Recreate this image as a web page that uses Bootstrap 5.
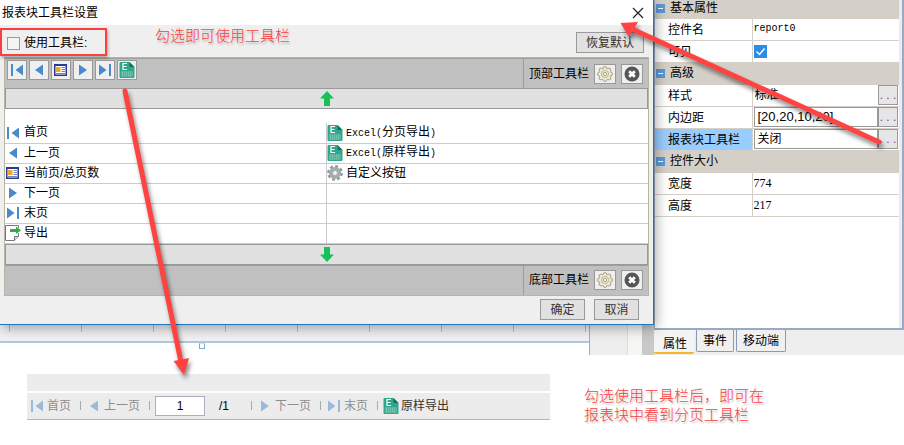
<!DOCTYPE html>
<html lang="zh-CN">
<head>
<meta charset="utf-8">
<meta name="viewport" content="width=device-width, initial-scale=1">
<title>报表块工具栏设置</title>
<link href="https://cdn.jsdelivr.net/npm/bootstrap@5.3.0/dist/css/bootstrap.min.css" rel="stylesheet">
<style>
  body { font: 12px/18px "Liberation Sans", "Noto Sans CJK SC", sans-serif; color: #000; background: #fff; }
  button, input { font: inherit; color: inherit; }
  .ico { width: 16px; height: 16px; flex: none; display: block; }
  .latin { font-family: "Liberation Mono", "Noto Sans CJK SC", monospace; font-size: 10px; }
  .note { color: #f8403e; font-size: 15px; font-weight: 300; line-height: 19px; text-shadow: 1px 2px 2px rgba(0,0,0,.25); }

  /* settings dialog */
  .dlg { background: #efefef; border-right: 1px solid #1c79c0; border-bottom: 1px solid #1c79c0; box-shadow: 2px 3px 12px rgba(0,0,0,.35); z-index: 2; }
  .dlg-title { height: 25px; background: #fff; padding: 0 9px 0 2px; }
  .dlg-close { border: 0; background: none; padding: 0; width: 12px; height: 12px; }
  .dlg-close svg { display: block; }
  .dlg-options { height: 32px; padding-right: 9px; }
  .use-box { margin-top: 3px; width: 107px; height: 28px; border: 2px solid #f8403e; padding: 2px 0 0 5px; gap: 4px; box-shadow: 1px 2px 3px rgba(0,0,0,.3); }
  .use-box input { appearance: none; width: 13px; height: 13px; margin: 0; border: 1px solid #999; background: #f4f4f4; }
  .use-note { margin: 1px 0 0 48px; }
  .plain-btn { height: 21px; border: 1px solid #999; background: #e1e1e1; color: #333; padding: 0; line-height: 20px; width: 45px; }
  .plain-btn.wide { width: 68px; margin-top: 7px; }
  .frame { margin: 0 4px; border: 1px solid #b7b5a3; }
  .tray { background: #c0c0c0; min-height: 30px; border-top: 1px solid #a09e92; }
  .tray-items { padding: 1px 2px; gap: 2px; border-right: 1px solid #a09e92; }
  .tray-side { width: 124px; gap: 5px; padding-left: 5px; }
  .tool { width: 20px; height: 20px; padding: 1px; border: 1px solid #999; background: #efefef; }
  .tray-side .tool { width: 22px; padding: 1px 2px; }
  .bar { height: 21px; background: #e1e1e1; border: 1px solid #999; }
  .items-area { background: #fff; padding-top: 14px; }
  .items-area table { table-layout: fixed; border-collapse: collapse; }
  .items-area td { height: 20px; padding: 0; border-bottom: 1px solid #ccc; line-height: 19px; }
  .items-area td + td { border-left: 1px solid #ccc; }
  .cell { gap: 3px; height: 19px; }

  .dlg-foot { gap: 9px; padding: 3px 14px 4px 0; }

  /* design canvas below the dialog */
  .canvas { height: 30px; background: #eee; }
  .paper { width: 590px; border-right: 1px solid #aaa; }
  .ruler { height: 16px; background: repeating-linear-gradient(90deg, transparent 0 9px, #bbb 9px 10px, transparent 10px 72px) 0 0 / 100% 7px no-repeat, #f1f1f3; }
  .sheet { height: 14px; background: #fff; border-top: 2px solid #a9c9e6; }
  .handle { width: 6px; height: 6px; border: 1px solid #85a9c6; border-top-color: #ddd; margin-left: 199px; }
  .gutter { width: 12px; background: #c9c9c9; }
  .gap-strip { width: 15px; background: #f6f6f4; border-left: 1px solid #ddd; }

  /* property pane */
  .pane { width: 250px; background: #eee; }
  .pane-body { background: #fff; border: solid #9aa9c4; border-width: 0 2px 2px 1px; height: 330px; }
  .pane-inner { border-right: 3px solid #ececec; height: 100%; }
  .props { table-layout: fixed; border-collapse: collapse; }
  .props td, .props th { height: 22px; padding: 0; font-weight: 400; border-bottom: 1px solid #d4d0c8; line-height: 20px; }
  .props .group th { background: #d4d0c8; }
  .props tr.first th { height: 18px; line-height: 15px; }
  .props .name { padding: 1px 0 0 13px; border-right: 1px solid #d4d0c8; }
  .props .chosen .name { background: #99ccff; }
  .fold { width: 9px; height: 9px; padding: 0; border: 0; background: #5b9bd8; margin: 0 1px; flex: none; }
  .fold::before { content: ""; display: block; width: 5px; height: 1px; background: #fff; margin: 0 auto; }
  .ell { width: 20px; height: 20px; padding: 0; border: 1px solid #999; background: #e6e6e6; color: #803c90; line-height: 16px; flex: none; }
  .value-row { padding: 0 1px; }
  .field { height: 20px; min-width: 0; border: 1px solid #999; padding: 0 3px; background: #fff; }
  .field.num { font-size: 13px; }
  .bare { border: 0; padding: 0 0 0 1px; min-width: 0; background: none; }
  .digits { font-family: "Liberation Serif", serif; }
  .tick { appearance: none; display: block; width: 13px; height: 13px; margin: 0 0 0 1px; background: #2b8cea url("data:image/svg+xml,%3Csvg xmlns='http://www.w3.org/2000/svg' viewBox='0 0 13 13'%3E%3Cpath d='M2.5 6.5l3 3 5-6' fill='none' stroke='white' stroke-width='1.5'/%3E%3C/svg%3E"); }
  .pane-tabs { gap: 2px; }
  .pane-tab { height: 22px; padding: 0 6px; border: 1px solid #8b99b8; border-top: 0; border-radius: 0 0 2px 2px; background: #f0f0f0; }
  .pane-tab.current { height: 24px; padding: 6px 7px 0 9px; border-width: 0 0 2px; border-color: #f7b52c; background: #f4f4f4; line-height: 16px; }

  /* paging toolbar */
  .lower { padding: 19px 0 0 27px; }
  .viewer { width: 523px; }
  .viewer-head { height: 17px; background: #ececec; margin-bottom: 2px; }
  .pager { height: 27px; background: #ececec; border-bottom: 1px solid #b5b5b5; padding-left: 2px; }
  .pager-btn { border: 0; background: none; padding: 0; gap: 2px; color: #333; display: flex; align-items: center; }
  .pager-btn:disabled { color: #8e8e8e; }
  .pager-btn:disabled svg { opacity: .5; }
  .split { width: 1px; height: 9px; background: #aaa; margin: 0 5px 0 9px; }
  .page-no { width: 50px; height: 20px; border: 1px solid #a9aec8; text-align: center; padding: 0; background: #fff; }
  .page-all { width: 23px; margin-left: 14px; }
  .lower-note { margin: 12px 0 0 34px; }

  .arrows { left: 0; top: 0; z-index: 5; pointer-events: none; filter: drop-shadow(2px 4px 2px rgba(0,0,0,.45)); }
</style>
<script src="https://cdn.jsdelivr.net/npm/bootstrap@5.3.0/dist/js/bootstrap.bundle.min.js"></script>
</head>
<body class="position-relative overflow-hidden">

<svg class="d-none">
  <symbol id="i-first" viewBox="0 0 16 16"><path d="M2 2h2v12H2zM14 2.500v11L6.500 8z" fill="#4a8aca"/></symbol>
  <symbol id="i-prev" viewBox="0 0 16 16"><path d="M12 2.500v11L4 8z" fill="#4a8aca"/></symbol>
  <symbol id="i-next" viewBox="0 0 16 16"><path d="M4 2.500v11L12 8z" fill="#4a8aca"/></symbol>
  <symbol id="i-last" viewBox="0 0 16 16"><path d="M12 2h2v12h-2zM2 2.500v11L9.500 8z" fill="#4a8aca"/></symbol>
  <symbol id="i-page" viewBox="0 0 16 16"><path d="M1 2h13v12H1z" fill="#2b3990"/><path d="M2.500 4h10v8.500h-10z" fill="#fff"/><path d="M3 5h4.500v5H3z" fill="#f5a32c"/><path d="M8.500 5.500H12M8.500 7.500H12M8.500 9.500H12M3 11.500h9" stroke="#6f86b8"/></symbol>
  <symbol id="i-excel" viewBox="0 0 16 16"><path d="M2 0h8.500L15.500 5v10q0 1-1 1H1.500q-1 0-1-1V1q0-1 1-1z" fill="#2fa78c"/><path d="M10.500 0v5h5z" fill="#14735f"/><path d="M8 1.500H4v6h4M4 4.500h3.500" fill="none" stroke="#fff" stroke-width="1.200"/><path d="M2.500 9.500h11v5h-11z" fill="#8fd0c1"/><path d="M2.500 11h11M2.500 13h11M4.500 9.500v5M6.500 9.500v5M8.500 9.500v5M10.500 9.500v5M12.500 9.500v5" stroke="#2fa78c" stroke-width=".6"/></symbol>
  <symbol id="i-export" viewBox="0 0 16 16"><path d="M13.500 8v3.500l-4 4h-9V.500h13V3" fill="#fff" stroke="#777"/><path d="M9.500 15.500v-4h4" fill="#ddd" stroke="#777"/><path d="M5 4h6V1.500L16 5.500 11 9V7H5z" fill="#35a853"/></symbol>
  <symbol id="i-gear" viewBox="0 0 16 16"><circle cx="8" cy="8" r="6.600" fill="none" stroke="#8e9a9a" stroke-width="2.600" stroke-dasharray="2.900 2.284"/><circle cx="8" cy="8" r="4.300" fill="none" stroke="#a3adad" stroke-width="3.600"/><circle cx="8" cy="8" r="2.500" fill="#f1f3f3" stroke="#7f8b8b" stroke-width=".6"/></symbol>
  <symbol id="i-cog" viewBox="0 0 16 16"><g fill="#efe8d0" stroke="#958c72" stroke-width=".8"><circle cx="8" cy="2.400" r="1.900"/><circle cx="12" cy="4" r="1.900"/><circle cx="13.600" cy="8" r="1.900"/><circle cx="12" cy="12" r="1.900"/><circle cx="8" cy="13.600" r="1.900"/><circle cx="4" cy="12" r="1.900"/><circle cx="2.400" cy="8" r="1.900"/><circle cx="4" cy="4" r="1.900"/></g><circle cx="8" cy="8" r="5.600" fill="#efe8d0"/><circle cx="8" cy="8" r="3.600" fill="none" stroke="#b3ab93" stroke-width=".8"/><circle cx="8" cy="8" r="1.600" fill="#fff" stroke="#948b70" stroke-width=".8"/></symbol>
  <symbol id="i-remove" viewBox="0 0 16 16"><circle cx="8" cy="8" r="7.500" fill="#555"/><path d="M5.200 5.200l5.600 5.600M10.800 5.200l-5.600 5.600" stroke="#fff" stroke-width="2.800"/></symbol>
  <symbol id="i-up" viewBox="0 0 16 16"><path d="M8 0l7 7.500h-4V15H5V7.500H1z" fill="#16c257"/></symbol>
  <symbol id="i-down" viewBox="0 0 16 16"><path d="M8 16l7-7.500h-4V1H5v7.500H1z" fill="#16c257"/></symbol>
</svg>

<div class="d-flex align-items-stretch">
  <main class="flex-grow-1 d-flex flex-column">
    <section class="dlg position-relative" role="dialog" aria-labelledby="dlgTitle">
      <header class="dlg-title d-flex align-items-center justify-content-between">
        <span id="dlgTitle">报表块工具栏设置</span>
        <button class="dlg-close" type="button" aria-label="关闭"><svg width="12" height="12"><path d="M1 1l10 10M11 1L1 11" stroke="#222" stroke-width="1.200"/></svg></button>
      </header>
      <div class="dlg-options d-flex align-items-start">
        <div class="use-box d-flex align-items-center">
          <input type="checkbox" id="useBar"><label for="useBar">使用工具栏:</label>
        </div>
        <span class="note use-note">勾选即可使用工具栏</span>
        <button class="plain-btn wide ms-auto" type="button">恢复默认</button>
      </div>
      <div class="frame">
        <div class="tray d-flex">
          <div class="tray-items d-flex flex-grow-1">
            <button class="tool" type="button" aria-label="首页"><svg class="ico"><use href="#i-first"/></svg></button>
            <button class="tool" type="button" aria-label="上一页"><svg class="ico"><use href="#i-prev"/></svg></button>
            <button class="tool" type="button" aria-label="当前页/总页数"><svg class="ico"><use href="#i-page"/></svg></button>
            <button class="tool" type="button" aria-label="下一页"><svg class="ico"><use href="#i-next"/></svg></button>
            <button class="tool" type="button" aria-label="末页"><svg class="ico"><use href="#i-last"/></svg></button>
            <button class="tool" type="button" aria-label="Excel"><svg class="ico"><use href="#i-excel"/></svg></button>
          </div>
          <div class="tray-side d-flex align-items-center">
            <span>顶部工具栏</span>
            <button class="tool" type="button" aria-label="设置"><svg class="ico"><use href="#i-cog"/></svg></button>
            <button class="tool" type="button" aria-label="清除"><svg class="ico"><use href="#i-remove"/></svg></button>
          </div>
        </div>
        <div class="bar d-flex align-items-center justify-content-center"><svg class="ico"><use href="#i-up"/></svg></div>
        <div class="items-area">
          <table class="w-100">
            <tr><td><div class="cell d-flex align-items-center"><svg class="ico"><use href="#i-first"/></svg>首页</div></td><td><div class="cell d-flex align-items-center"><svg class="ico"><use href="#i-excel"/></svg><span><span class="latin">Excel(</span>分页导出<span class="latin">)</span></span></div></td></tr>
            <tr><td><div class="cell d-flex align-items-center"><svg class="ico"><use href="#i-prev"/></svg>上一页</div></td><td><div class="cell d-flex align-items-center"><svg class="ico"><use href="#i-excel"/></svg><span><span class="latin">Excel(</span>原样导出<span class="latin">)</span></span></div></td></tr>
            <tr><td><div class="cell d-flex align-items-center"><svg class="ico"><use href="#i-page"/></svg>当前页/总页数</div></td><td><div class="cell d-flex align-items-center"><svg class="ico"><use href="#i-gear"/></svg>自定义按钮</div></td></tr>
            <tr><td><div class="cell d-flex align-items-center"><svg class="ico"><use href="#i-next"/></svg>下一页</div></td><td></td></tr>
            <tr><td><div class="cell d-flex align-items-center"><svg class="ico"><use href="#i-last"/></svg>末页</div></td><td></td></tr>
            <tr><td><div class="cell d-flex align-items-center"><svg class="ico"><use href="#i-export"/></svg>导出</div></td><td></td></tr>
          </table>
        </div>
        <div class="bar d-flex align-items-center justify-content-center"><svg class="ico"><use href="#i-down"/></svg></div>
        <div class="tray d-flex">
          <div class="tray-items flex-grow-1"></div>
          <div class="tray-side d-flex align-items-center">
            <span>底部工具栏</span>
            <button class="tool" type="button" aria-label="设置"><svg class="ico"><use href="#i-cog"/></svg></button>
            <button class="tool" type="button" aria-label="清除"><svg class="ico"><use href="#i-remove"/></svg></button>
          </div>
        </div>
      </div>
      <footer class="dlg-foot d-flex justify-content-end">
        <button class="plain-btn" type="button">确定</button>
        <button class="plain-btn" type="button">取消</button>
      </footer>
    </section>
    <div class="canvas d-flex">
      <div class="paper"><div class="ruler"></div><div class="sheet"><div class="handle"></div></div></div>
      <div class="gap-strip ms-auto"></div>
      <div class="gutter"></div>
    </div>
  </main>

  <aside class="pane flex-shrink-0">
    <div class="pane-body"><div class="pane-inner">
      <table class="props w-100">
        <colgroup><col style="width:97px"><col></colgroup>
        <tr class="group first"><th colspan="2"><div class="d-flex align-items-center"><button class="fold" type="button" aria-label="折叠"></button><span class="ps-1">基本属性</span></div></th></tr>
        <tr><td class="name"><label for="pName">控件名</label></td><td><input class="bare latin w-100 d-block" id="pName" value="report0"></td></tr>
        <tr><td class="name"><label for="pShow">可见</label></td><td><input class="tick" type="checkbox" id="pShow" checked></td></tr>
        <tr class="group"><th colspan="2"><div class="d-flex align-items-center"><button class="fold" type="button" aria-label="折叠"></button><span class="ps-1">高级</span></div></th></tr>
        <tr><td class="name"><label for="pStyle">样式</label></td><td><div class="value-row d-flex"><input class="bare flex-grow-1" id="pStyle" value="标准"><button class="ell" type="button">. . .</button></div></td></tr>
        <tr><td class="name"><label for="pPad">内边距</label></td><td><div class="value-row d-flex"><input class="field num flex-grow-1" id="pPad" value="[20,20,10,20]"><button class="ell" type="button">. . .</button></div></td></tr>
        <tr class="chosen"><td class="name"><label for="pBar">报表块工具栏</label></td><td><div class="value-row d-flex"><input class="field flex-grow-1" id="pBar" value="关闭"><button class="ell" type="button">. . .</button></div></td></tr>
        <tr class="group"><th colspan="2"><div class="d-flex align-items-center"><button class="fold" type="button" aria-label="折叠"></button><span class="ps-1">控件大小</span></div></th></tr>
        <tr><td class="name"><label for="pW">宽度</label></td><td><input class="bare digits w-100 d-block" id="pW" value="774"></td></tr>
        <tr><td class="name"><label for="pH">高度</label></td><td><input class="bare digits w-100 d-block" id="pH" value="217"></td></tr>
      </table>
    </div></div>
    <div class="pane-tabs d-flex align-items-start">
      <button class="pane-tab current" type="button">属性</button>
      <button class="pane-tab" type="button">事件</button>
      <button class="pane-tab" type="button">移动端</button>
    </div>
  </aside>
</div>

<div class="lower d-flex align-items-start">
  <div class="viewer flex-shrink-0">
    <div class="viewer-head"></div>
    <div class="pager d-flex align-items-center">
      <button class="pager-btn" type="button" disabled><svg class="ico"><use href="#i-first"/></svg>首页</button>
      <span class="split"></span>
      <button class="pager-btn" type="button" disabled><svg class="ico"><use href="#i-prev"/></svg>上一页</button>
      <span class="split"></span>
      <input class="page-no" value="1" aria-label="当前页">
      <span class="page-all">/1</span>
      <span class="split"></span>
      <button class="pager-btn" type="button" disabled><svg class="ico"><use href="#i-next"/></svg>下一页</button>
      <span class="split"></span>
      <button class="pager-btn" type="button" disabled><svg class="ico"><use href="#i-last"/></svg>末页</button>
      <span class="split"></span>
      <button class="pager-btn" type="button"><svg class="ico"><use href="#i-excel"/></svg>原样导出</button>
    </div>
  </div>
  <p class="note lower-note mb-0">勾选使用工具栏后，即可在<br>报表块中看到分页工具栏</p>
</div>

<svg class="arrows position-absolute" width="904" height="445">
  <path d="M125 91L181 362" stroke="#ff4340" stroke-width="5" stroke-linecap="round"/>
  <path d="M173.500 361L189 358 184 375z" fill="#ff4340"/>
  <path d="M879 142L632 29" stroke="#ff4340" stroke-width="5" stroke-linecap="round"/>
  <path d="M620.500 23L638 22 629 37z" fill="#ff4340"/>
</svg>
</body>
</html>
